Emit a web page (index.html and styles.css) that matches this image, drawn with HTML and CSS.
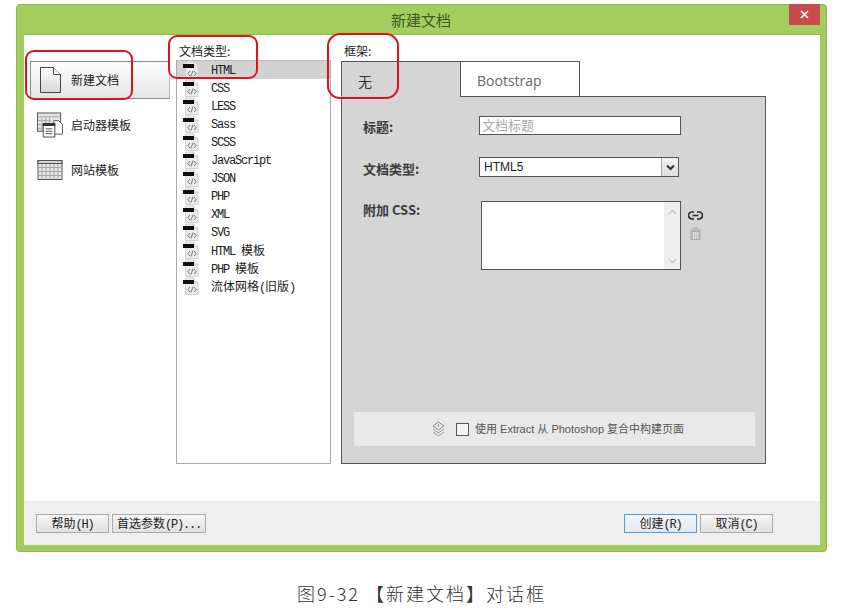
FILE: index.html
```html
<!DOCTYPE html>
<html lang="zh">
<head>
<meta charset="utf-8">
<title>新建文档</title>
<link rel="stylesheet" href="styles.css">
</head>
<body>
<svg class="defs" width="0" height="0" aria-hidden="true">
  <symbol id="file" viewBox="0 0 16 18">
    <path d="M2.500 1h8.500l4 4v12.500H2.500z" fill="#ececec" stroke="#d2d2d2"/>
    <path d="M11 1v4h4" fill="#fff" stroke="#c8c8c8"/>
    <rect x="0" y="3" width="11" height="4" fill="#0d0d0d"/>
    <path d="M7 10 4.800 12.500 7 15M11 10l2.200 2.500L11 15M10 9.500 8 15.500" fill="none" stroke="#777" stroke-width="1"/>
  </symbol>
</svg>

<main class="dialog">
  <header class="titlebar">
    <h1 class="title">新建文档</h1>
    <button class="close" type="button" aria-label="关闭">
      <svg width="9" height="9" viewBox="0 0 9 9"><path d="M1 1l7 7M8 1 1 8" stroke="#fff" stroke-width="1.700" fill="none"/></svg>
    </button>
  </header>

  <div class="content">
    <nav class="side">
      <a class="side-item is-active">
        <svg class="side-doc" width="21" height="26" viewBox="0 0 21 26"><defs><linearGradient id="docg" x1="0" y1="0" x2="0" y2="1"><stop offset="0" stop-color="#fff"/><stop offset="1" stop-color="#d8d8d8"/></linearGradient></defs><path d="M.5.500h13l7 7v18H.5z" fill="url(#docg)" stroke="#444"/><path d="M13.500.500v7h7" fill="#fff" stroke="#444"/></svg>
        <span class="side-text">新建文档</span>
      </a>
      <a class="side-item">
        <svg class="side-ico" width="27" height="26" viewBox="0 0 27 26"><rect x=".5" y=".5" width="24" height="19" fill="#e4e4e4" stroke="#555"/><path d="M1 4.500h23M5 5v14M9 5v14M13 5v14M1 8.500h14M1 12.500h10M1 16.500h6" stroke="#aaa" fill="none"/><path d="M17.500 8.500h5l4 4v10h-9z" fill="#fff" stroke="#555"/><path d="M6.500 11.500h12v14h-12z" fill="#fff" stroke="#444"/><rect x="6" y="11" width="13" height="3" fill="#333"/><path d="M9 17h7M9 19.500h7M9 22h7" stroke="#555"/></svg>
        <span class="side-text">启动器模板</span>
      </a>
      <a class="side-item">
        <svg class="side-ico" width="25" height="20" viewBox="0 0 25 20"><rect x=".5" y=".5" width="24" height="19" fill="#e6e6e6" stroke="#555"/><rect x=".5" y=".5" width="24" height="3" fill="#cfcfcf" stroke="#555"/><path d="M4.500 4v15M8.500 4v15M12.500 4v15M16.500 4v15M20.500 4v15M1 7.500h23M1 11.500h23M1 15.500h23" stroke="#a9a9a9" fill="none"/></svg>
        <span class="side-text">网站模板</span>
      </a>
    </nav>

    <section class="types">
      <div class="label">文档类型:</div>
      <ul class="type-list">
        <li class="type is-selected"><svg class="file"><use href="#file"/></svg>HTML</li>
        <li class="type"><svg class="file"><use href="#file"/></svg>CSS</li>
        <li class="type"><svg class="file"><use href="#file"/></svg>LESS</li>
        <li class="type"><svg class="file"><use href="#file"/></svg>Sass</li>
        <li class="type"><svg class="file"><use href="#file"/></svg>SCSS</li>
        <li class="type"><svg class="file"><use href="#file"/></svg>JavaScript</li>
        <li class="type"><svg class="file"><use href="#file"/></svg>JSON</li>
        <li class="type"><svg class="file"><use href="#file"/></svg>PHP</li>
        <li class="type"><svg class="file"><use href="#file"/></svg>XML</li>
        <li class="type"><svg class="file"><use href="#file"/></svg>SVG</li>
        <li class="type"><svg class="file"><use href="#file"/></svg><span>HTML&nbsp;<b class="zh">模板</b></span></li>
        <li class="type"><svg class="file"><use href="#file"/></svg><span>PHP&nbsp;<b class="zh">模板</b></span></li>
        <li class="type"><svg class="file"><use href="#file"/></svg><span><b class="zh">流体网格</b>(<b class="zh">旧版</b>)</span></li>
      </ul>
    </section>

    <section class="frame">
      <div class="label frame-label">框架:</div>
      <div class="tabs">
        <div class="tab tab-on">无</div>
        <div class="tab tab-off">Bootstrap</div>
      </div>
      <div class="panel">
        <div class="form">
          <div class="row row-title">
            <label class="field-label">标题:</label>
            <input class="text-input" type="text" placeholder="文档标题" readonly>
          </div>
          <div class="row row-type">
            <label class="field-label">文档类型:</label>
            <div class="select">
              <span>HTML5</span>
              <span class="select-btn"><svg width="9" height="7" viewBox="0 0 9 7"><path d="M1 1.500l3.500 3.500L8 1.500" stroke="#333" stroke-width="2" fill="none"/></svg></span>
            </div>
          </div>
          <div class="row row-css">
            <label class="field-label">附加 CSS:</label>
            <div class="css-box">
              <div class="css-scroll">
                <svg width="9" height="6" viewBox="0 0 9 6"><path d="M1 5l3.500-3.500L8 5" stroke="#c4c4c4" stroke-width="1.400" fill="none"/></svg>
                <svg width="9" height="6" viewBox="0 0 9 6"><path d="M1 1l3.500 3.500L8 1" stroke="#c4c4c4" stroke-width="1.400" fill="none"/></svg>
              </div>
            </div>
            <div class="css-actions">
              <svg width="15" height="9" viewBox="0 0 15 9"><path d="M6 1H4a3.500 3.500 0 0 0 0 7h2M9 1h2a3.500 3.500 0 0 1 0 7H9M4.500 4.500h6" stroke="#2b2b2b" stroke-width="1.700" fill="none"/></svg>
              <svg width="13" height="13" viewBox="0 0 13 13"><path d="M1 3h11M4.500 2.500v-1.500h4v1.500" stroke="#a9a9a9" fill="none"/><path d="M2 4.500h9V12.500H2z" fill="#c0c0c0" stroke="#a9a9a9"/><path d="M4.500 5v7M6.500 5v7M8.500 5v7" stroke="#e0e0e0"/></svg>
            </div>
          </div>
        </div>
        <div class="extract">
          <svg width="15" height="16" viewBox="0 0 15 16"><path d="M7.500 1 13 5 7.500 9 2 5z" fill="none" stroke="#888"/><path d="M2 8l5.500 4L13 8M2 11l5.500 4L13 11" fill="none" stroke="#999"/><path d="M7.500 3v3" stroke="#999"/></svg>
          <span class="check"></span>
          <span class="extract-text">使用 Extract 从 Photoshop 复合中构建页面</span>
        </div>
      </div>
    </section>
  </div>

  <footer class="footer">
    <button class="btn btn-help" type="button"><b class="zh">帮助</b>(H)</button>
    <button class="btn btn-pref" type="button"><b class="zh">首选参数</b>(P)...</button>
    <span class="spacer"></span>
    <button class="btn btn-main is-default" type="button"><b class="zh">创建</b>(R)</button>
    <button class="btn btn-main" type="button"><b class="zh">取消</b>(C)</button>
  </footer>

  <div class="mark mark-a"></div>
  <div class="mark mark-b"></div>
  <div class="mark mark-c"></div>
</main>

<p class="caption">图9-32 【新建文档】对话框</p>
</body>
</html>
```

FILE: styles.css
```css
* { box-sizing: border-box; }
html, body { margin: 0; padding: 0; }
body {
  width: 862px;
  height: 608px;
  overflow: hidden;
  background: #fff;
  padding: 4px 0 0 16px;
  font-family: "Noto Sans CJK SC", "Liberation Sans", sans-serif;
  font-size: 12px;
  color: #222;
}
.defs { position: absolute; }
.zh {
  font-family: "Noto Sans CJK SC", sans-serif;
  font-weight: 400;
  letter-spacing: 0;
}

.dialog {
  position: relative;
  width: 811px;
  height: 548px;
  display: flex;
  flex-direction: column;
  background: #a2ce5f;
  border: 1px solid #8fb552;
  border-radius: 4px;
  padding: 0 6px 6px 7px;
}
.titlebar {
  height: 30px;
  flex: none;
  display: flex;
  align-items: flex-start;
  justify-content: center;
  position: relative;
  border-bottom: 1px solid #8fb552;
}
.title {
  margin: 4px 2px 0 0;
  font-size: 15px;
  line-height: 22px;
  font-weight: 400;
  color: #3d5a22;
}
.close {
  position: absolute;
  right: 0;
  top: -1px;
  width: 31px;
  height: 21px;
  border: 0;
  padding: 0;
  background: #c94b4b;
  display: flex;
  align-items: center;
  justify-content: center;
}

.content {
  flex: 1;
  min-height: 0;
  background: #fff;
  display: flex;
  padding-left: 6px;
}

.side {
  width: 140px;
  flex: none;
  padding-top: 26px;
  display: flex;
  flex-direction: column;
  gap: 7px;
}
.side-item {
  height: 38px;
  display: flex;
  align-items: center;
  border: 1px solid transparent;
  color: #222;
}
.side-text { margin-bottom: 2px; }
.side-item.is-active {
  background: linear-gradient(#fff, #e4e4e4);
  border-color: #8a8a8a;
  border-right-color: #bbb;
}
.side-doc { margin: 0 10px 0 9px; }
.side-ico { margin: 0 8px 0 6px; width: 26px; }

.types {
  width: 155px;
  flex: none;
  margin-left: 6px;
  display: flex;
  flex-direction: column;
  padding-bottom: 37px;
}
.label {
  height: 17px;
  margin-top: 8px;
  padding-left: 3px;
  line-height: 16px;
  color: #222;
}
.type-list {
  flex: 1;
  list-style: none;
  margin: 0;
  padding: 0;
  border: 1px solid #aaa;
  border-top-color: #bbb;
}
.type {
  height: 18px;
  display: flex;
  align-items: center;
  padding: 2px 0 0 6px;
  font-family: "Liberation Mono", "Noto Sans CJK SC", monospace;
  font-size: 12px;
  line-height: 16px;
  letter-spacing: -1.200px;
  color: #222;
}
.type.is-selected { background: #d2d2d2; }
.file { width: 16px; height: 18px; margin: -2px 12px 0 0; flex: none; }

.frame {
  width: 425px;
  flex: none;
  margin-left: 10px;
  display: flex;
  flex-direction: column;
  padding-bottom: 37px;
}
.frame-label { padding-left: 3px; height: 18px; }
.tabs { display: flex; height: 36px; flex: none; position: relative; z-index: 1; margin-bottom: -1px; }
.tab {
  width: 119px;
  height: 36px;
  border: 1px solid #555;
  display: flex;
  align-items: center;
}
.tab-on {
  background: #d5d5d5;
  border-right: 0;
  border-bottom-color: #d5d5d5;
  padding: 4px 0 0 16px;
  font-size: 14px;
  color: #333;
}
.tab-off {
  width: 120px;
  background: #fff;
  padding: 3px 0 0 16px;
  font-family: "Open Sans", "Liberation Sans", sans-serif;
  font-size: 14px;
  color: #666;
}
.panel {
  flex: 1;
  background: #d5d5d5;
  border: 1px solid #555;
  padding: 19px 10px 17px 12px;
  display: flex;
  flex-direction: column;
  justify-content: space-between;
}
.form { display: flex; flex-direction: column; }
.row { display: flex; align-items: center; padding-left: 9px; }
.row-type { margin-top: 22px; }
.row-css { margin-top: 24px; align-items: flex-start; }
.field-label {
  width: 116px;
  flex: none;
  padding-top: 2px;
  font-weight: 700;
  color: #3a3a3a;
  font-size: 13px;
  line-height: 17px;
}
.row-css .field-label { padding-top: 0; line-height: 18px; width: 118px; }
.text-input {
  width: 202px;
  height: 19px;
  background: #fff;
  border: 1px solid #555;
  padding: 0 2px 2px;
  font: 13px/15px "Noto Sans CJK SC", sans-serif;
  outline: 0;
}
.text-input::placeholder { color: #aaa; opacity: 1; }
.select {
  width: 200px;
  height: 20px;
  background: #fff;
  border: 1px solid #555;
  display: flex;
  align-items: center;
  justify-content: space-between;
  padding-left: 4px;
  font-family: "Liberation Sans", sans-serif;
  color: #222;
}
.select-btn {
  width: 17px;
  height: 18px;
  background: linear-gradient(#f3f3f3, #dedede);
  border-left: 1px solid #aaa;
  display: flex;
  align-items: center;
  justify-content: center;
}
.css-box {
  width: 200px;
  height: 69px;
  flex: none;
  background: #fff;
  border: 1px solid #555;
  display: flex;
  justify-content: flex-end;
}
.css-scroll {
  width: 16px;
  background: #eee;
  display: flex;
  flex-direction: column;
  align-items: center;
  justify-content: space-between;
  padding: 7px 0 5px;
}
.css-actions {
  display: flex;
  flex-direction: column;
  align-items: center;
  gap: 7px;
  margin: 10px 0 0 7px;
  width: 15px;
}
.extract {
  height: 34px;
  background: #e9e9e9;
  display: flex;
  align-items: center;
  padding-left: 77px;
  font-size: 10px;
  color: #555;
}
.check {
  width: 13px;
  height: 13px;
  margin: 0 6px 0 10px;
  background: #f4f4f4;
  border: 1px solid #555;
  flex: none;
}
.extract-text {
  margin-bottom: 2px;
  font-family: "Liberation Sans", "Noto Sans CJK SC", sans-serif;
  font-size: 11px;
  white-space: nowrap;
}

.footer {
  height: 44px;
  flex: none;
  background: #efeff0;
  display: flex;
  align-items: center;
  gap: 3px;
  padding: 0 47px 0 12px;
}
.spacer { flex: 1; }
.btn {
  height: 19px;
  padding: 0 0 2px;
  background: linear-gradient(#f6f6f6, #e1e1e1);
  border: 1px solid #aaa;
  font-family: "Liberation Mono", "Noto Sans CJK SC", monospace;
  font-size: 12px;
  letter-spacing: -1.200px;
  color: #222;
  line-height: 15px;
}
.btn-help, .btn-main { width: 73px; }
.btn-pref { width: 94px; }
.is-default { border-color: #4d9fe0; background: linear-gradient(#f3f7fb, #e3e8ee); }

.mark {
  position: absolute;
  z-index: 2;
  border: 2px solid #e0131c;
  pointer-events: none;
}
.mark-a { left: 8px; top: 45px; width: 108px; height: 50px; border-radius: 9px; }
.mark-b { left: 151px; top: 30px; width: 90px; height: 44px; border-radius: 9px; }
.mark-c { left: 310px; top: 28px; width: 72px; height: 66px; border-radius: 13px; }

.caption {
  margin: 29px 0 0;
  width: 811px;
  text-align: center;
  font-size: 18px;
  line-height: 24px;
  letter-spacing: 2px;
  font-weight: 300;
  color: #333;
}
```
